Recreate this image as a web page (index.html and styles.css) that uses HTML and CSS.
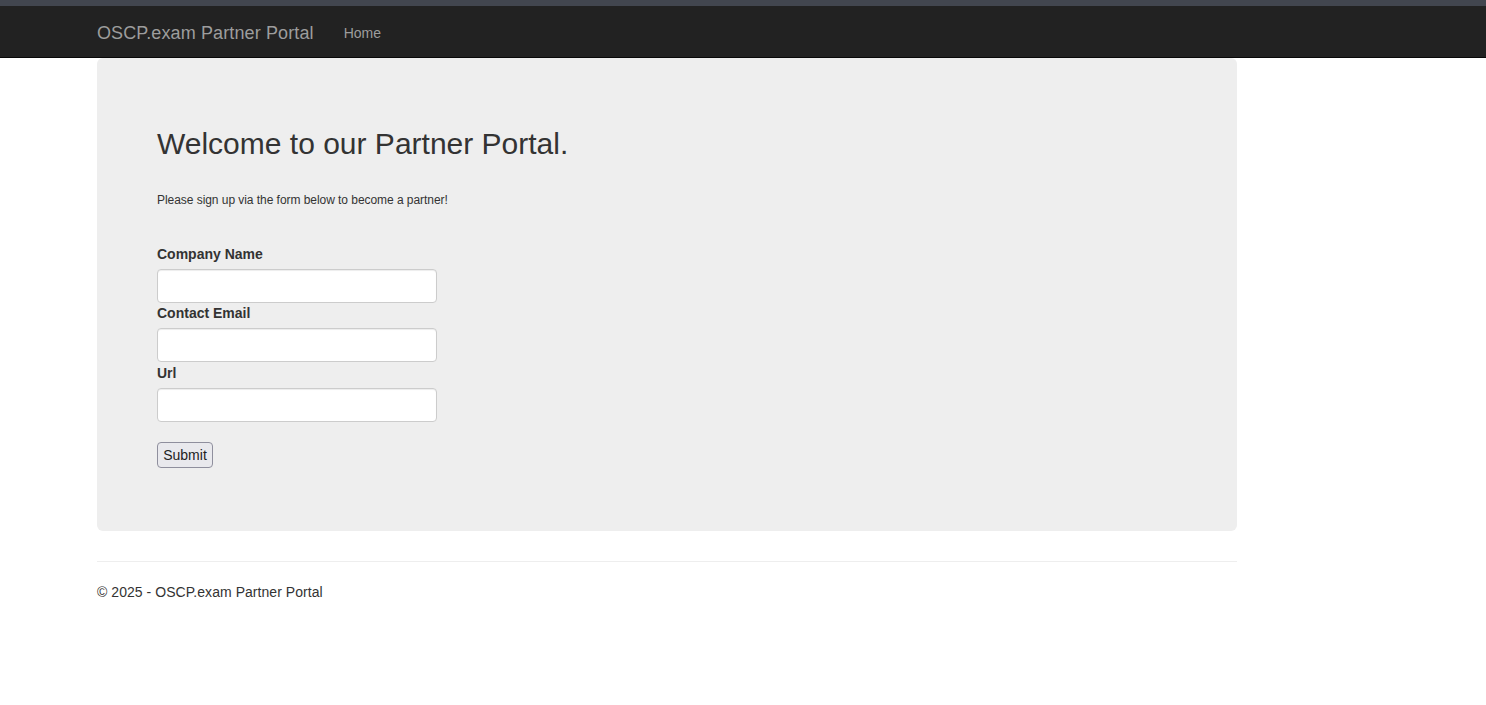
FILE: index.html
```html
<!DOCTYPE html>
<html>
<head>
<meta charset="utf-8">
<title>OSCP.exam Partner Portal</title>
<link rel="stylesheet" href="styles.css">
</head>
<body>
<div class="topstrip"></div>
<nav class="navbar">
  <div class="container nav-inner">
    <a class="brand" href="#">OSCP.exam Partner Portal</a>
    <a class="nav-link" href="#">Home</a>
  </div>
</nav>
<div class="container">
  <div class="jumbotron">
    <h2 class="title">Welcome to our Partner Portal.</h2>
    <p class="intro">Please sign up via the form below to become a partner!</p>
    <form class="form">
      <label class="label">Company Name</label>
      <input class="input" type="text">
      <label class="label">Contact Email</label>
      <input class="input" type="text">
      <label class="label label-url">Url</label>
      <input class="input" type="text">
      <div class="actions"><button class="btn" type="button">Submit</button></div>
    </form>
  </div>
  <hr class="rule">
  <footer class="footer"><p class="footer-text">&copy; 2025 - OSCP.exam Partner Portal</p></footer>
</div>
</body>
</html>
```
FILE: styles.css
```css
* { box-sizing: border-box; }
html, body { margin: 0; padding: 0; }
body {
  font-family: "Liberation Sans", Arial, Helvetica, sans-serif;
  font-size: 14px;
  line-height: 20px;
  color: #333;
  background: #fff;
}
.topstrip { height: 6px; background: #42464f; }
.navbar {
  height: 52px;
  background: #222;
  border-bottom: 1px solid #080808;
}
.container { width: 1140px; margin-left: 97px; }
.nav-inner { display: flex; align-items: center; height: 51px; padding-top: 2px; }
.brand {
  font-size: 18px;
  line-height: 20px;
  color: #9d9d9d;
  text-decoration: none;
  letter-spacing: 0.12px;
  padding-right: 15px;
}
.nav-link {
  font-size: 14px;
  color: #9d9d9d;
  text-decoration: none;
  padding: 0 15px;
  margin-top: 1px;
}
.jumbotron {
  background: #eee;
  border-radius: 6px;
  padding: 48px 60px 48px 60px;
  margin-bottom: 30px;
}
.title {
  font-size: 30px;
  line-height: 33px;
  font-weight: 500;
  margin: 21px 0 0 0;
  color: #333;
}
.intro {
  font-size: 12px;
  line-height: 20px;
  letter-spacing: -0.05px;
  margin: 30px 0 0 0;
}
.form { display: flex; flex-direction: column; align-items: flex-start; margin-top: 34px; padding-bottom: 15px; }
.label {
  font-weight: bold;
  font-size: 14px;
  line-height: 20px;
  margin-bottom: 5px;
}
.input {
  width: 280px;
  height: 34px;
  border: 1px solid #ccc;
  border-radius: 4px;
  background: #fff;
  box-shadow: inset 0 1px 1px rgba(0,0,0,.075);
  margin: 0;
}
.label-url { margin-top: 1px; }
.actions { margin-top: 20px; }
.btn {
  font-family: "Liberation Sans", Arial, sans-serif;
  font-size: 14px;
  height: 26px;
  width: 56px;
  padding: 0;
  background: #e9e9ed;
  border: 1px solid #8f8f9d;
  border-radius: 4px;
  color: #222;
}
.rule {
  border: 0;
  border-top: 1px solid #eee;
  margin: 30px 0 20px 0;
  height: 0;
}
.footer-text { margin: 0; line-height: 20px; letter-spacing: 0.05px; }
```
